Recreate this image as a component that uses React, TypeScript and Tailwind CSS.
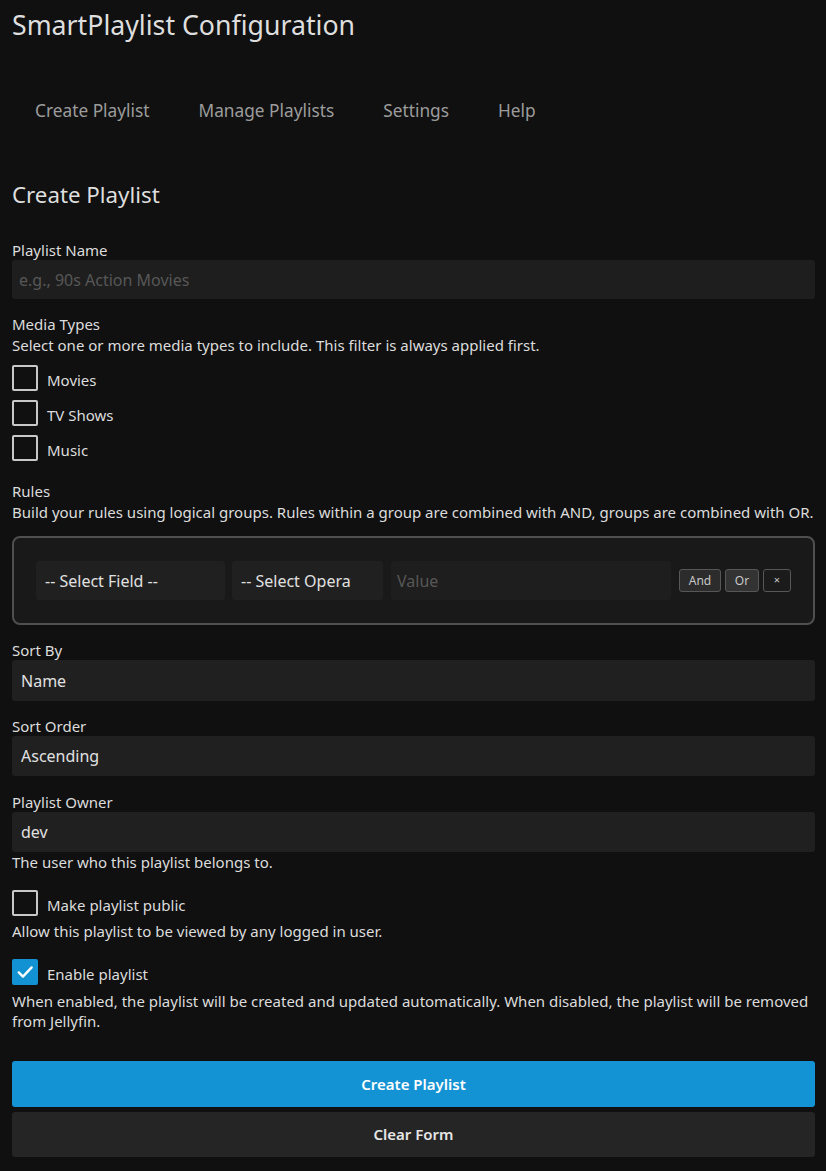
import React, { useState } from 'react';

const font = { fontFamily: '"Noto Sans", "Open Sans", sans-serif' };

function Box({ checked, onClick }: { checked: boolean; onClick: () => void }) {
  return (
    <span
      onClick={onClick}
      className={`flex h-[26px] w-[26px] shrink-0 items-center justify-center rounded-[2px] cursor-pointer ${
        checked ? 'bg-[#1392d3]' : 'border-2 border-[#c8c8c8]'
      }`}
    >
      {checked && (
        <svg width="20" height="20" viewBox="0 0 24 24" fill="none" stroke="#fff" strokeWidth="2.8" strokeLinecap="round" strokeLinejoin="round">
          <path d="M4.5 12.5l5 5L20 6.5" />
        </svg>
      )}
    </span>
  );
}

function Check({ label, checked, onToggle, className = '' }: { label: string; checked: boolean; onToggle: () => void; className?: string }) {
  return (
    <label className={`flex items-center gap-[9px] ${className}`}>
      <Box checked={checked} onClick={onToggle} />
      <span className="pt-[3px] text-[15px] leading-[20px] text-[#dcdcdc]">{label}</span>
    </label>
  );
}

export default function App() {
  const [media, setMedia] = useState({ movies: false, tv: false, music: false });
  const [isPublic, setIsPublic] = useState(false);
  const [enabled, setEnabled] = useState(true);

  const labelCls = 'text-[15px] leading-[20px] text-[#dcdcdc]';
  const selectCls =
    'h-[40px] w-full appearance-none rounded-[3px] bg-[#202020] pl-[9px] pr-[32px] text-[16px] text-[#e0e0e0] outline-none';

  return (
    <div style={font} className="min-h-[1171px] bg-[#101010] pl-3 pr-[11px] pt-[9px] pb-[14px]">
      <h1 className="text-[26.7px] leading-[31px] text-[#dedede]">SmartPlaylist Configuration</h1>

      {/* Tabs */}
      <nav className="mt-[59px] ml-[23px] flex gap-[49px] text-[17.3px] leading-[24px] text-[#9c9c9c]">
        <span>Create Playlist</span>
        <span>Manage Playlists</span>
        <span>Settings</span>
        <span>Help</span>
      </nav>

      <h2 className="mt-[57px] text-[22.3px] leading-[30px] text-[#dedede]">Create Playlist</h2>

      <div className={`mt-[30px] ${labelCls}`}>Playlist Name</div>
      <input
        placeholder="e.g., 90s Action Movies"
        className="block h-[39px] w-full rounded-[3px] bg-[#1e1e1e] px-[7px] text-[16px] text-[#e0e0e0] outline-none placeholder:text-[#575757]"
      />

      <div className={`mt-[15px] ${labelCls}`}>Media Types</div>
      <div className={`mt-px ${labelCls}`}>Select one or more media types to include. This filter is always applied first.</div>
      <div className="mt-[10px] flex flex-col gap-[9px]">
        <Check label="Movies" checked={media.movies} onToggle={() => setMedia({ ...media, movies: !media.movies })} />
        <Check label="TV Shows" checked={media.tv} onToggle={() => setMedia({ ...media, tv: !media.tv })} />
        <Check label="Music" checked={media.music} onToggle={() => setMedia({ ...media, music: !media.music })} />
      </div>

      <div className={`mt-[20px] ${labelCls}`}>Rules</div>
      <div className={`mt-px whitespace-nowrap ${labelCls}`}>
        Build your rules using logical groups. Rules within a group are combined with AND, groups are combined with OR.
      </div>

      {/* Rule group */}
      <div className="mt-[14px] flex items-center rounded-[8px] border-2 border-[#4f4f4f] bg-[#191919] px-[22px] py-[23px]">
        <select className="h-[39px] w-[189px] shrink-0 appearance-none rounded-[3px] bg-[#202020] pl-[9px] pr-[32px] text-[16px] text-[#e0e0e0] outline-none">
          <option>-- Select Field --</option>
        </select>
        <select className="ml-[7px] h-[39px] w-[151px] shrink-0 appearance-none rounded-[3px] bg-[#202020] pl-[9px] pr-[32px] text-[16px] text-[#e0e0e0] outline-none">
          <option>-- Select Operator --</option>
        </select>
        <input
          placeholder="Value"
          className="ml-[8px] h-[39px] min-w-0 flex-1 rounded-[3px] bg-[#1e1e1e] px-[6px] text-[16px] text-[#e0e0e0] outline-none placeholder:text-[#575757]"
        />
        <button className="ml-[8px] h-[23px] w-[42px] rounded-[3px] border border-[#575757] bg-[#2c2c2c] text-[12px] text-[#c8c8c8]">And</button>
        <button className="ml-[4px] h-[23px] w-[34px] rounded-[3px] border border-[#575757] bg-[#333333] text-[12px] text-[#c8c8c8]">Or</button>
        <button className="ml-[4px] h-[23px] w-[28px] rounded-[3px] border border-[#575757] bg-[#1b1b1b] text-[11px] text-[#c8c8c8]">×</button>
      </div>

      <div className={`mt-[15px] ${labelCls}`}>Sort By</div>
      <select className={`h-[41px] ${selectCls}`}>
        <option>Name</option>
      </select>

      <div className={`mt-[15px] ${labelCls}`}>Sort Order</div>
      <select className={selectCls}>
        <option>Ascending</option>
      </select>

      <div className={`mt-[16px] ${labelCls}`}>Playlist Owner</div>
      <select className={selectCls}>
        <option>dev</option>
      </select>
      <div className={labelCls}>The user who this playlist belongs to.</div>

      <Check className="mt-[18px]" label="Make playlist public" checked={isPublic} onToggle={() => setIsPublic(!isPublic)} />
      <div className={`mt-[5px] ${labelCls}`}>Allow this playlist to be viewed by any logged in user.</div>

      <Check className="mt-[18px]" label="Enable playlist" checked={enabled} onToggle={() => setEnabled(!enabled)} />
      <div className={`mt-[6px] ${labelCls}`}>
        When enabled, the playlist will be created and updated automatically. When disabled, the playlist will be removed from Jellyfin.
      </div>

      <button className="mt-[30px] block h-[46px] w-full rounded-[3px] bg-[#1392d4] text-[15px] font-semibold text-white">
        Create Playlist
      </button>
      <button className="mt-[5px] block h-[45px] w-full rounded-[3px] bg-[#252525] text-[15px] font-semibold text-[#e6e6e6]">
        Clear Form
      </button>
    </div>
  );
}
